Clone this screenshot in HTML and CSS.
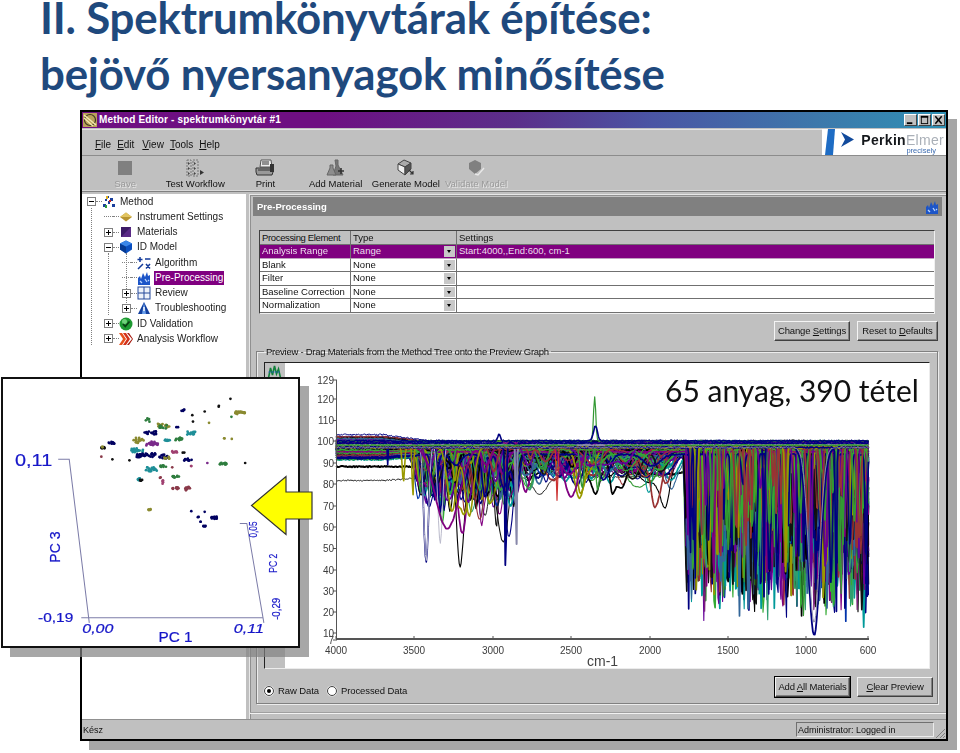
FILE: index.html
```html
<!DOCTYPE html>
<html lang="hu">
<head>
<meta charset="utf-8">
<title>Spektrumkönyvtárak építése</title>
<link rel="stylesheet" href="styles.css">
</head>
<body>
<div class="slide">
  <h1 class="slide-title">II. Spektrumkönyvtárak építése:<br>bejövő nyersanyagok minősítése</h1>

  <div class="window">
    <div class="titlebar">
      <svg class="title-icon" viewBox="0 0 14 14"><rect width="14" height="14" fill="#b9a15a"/><circle cx="7" cy="7" r="5.5" fill="none" stroke="#3c3a20" stroke-width="1.2"/><path d="M1 2 L13 12 M1 5 L10 13" stroke="#f2e8b0" stroke-width="1.4"/></svg>
      <span class="title-text">Method Editor - spektrumkönyvtár #1</span>
      <div class="title-buttons">
        <span class="tbtn"><svg viewBox="0 0 12 11"><rect x="2" y="8" width="6" height="2" fill="#000"/></svg></span>
        <span class="tbtn"><svg viewBox="0 0 12 11"><rect x="2.5" y="1.5" width="7" height="8" fill="none" stroke="#000"/><rect x="2" y="1" width="8" height="2" fill="#000"/></svg></span>
        <span class="tbtn"><svg viewBox="0 0 12 11"><path d="M2.5 1.5 L9.5 9.5 M9.5 1.5 L2.5 9.5" stroke="#000" stroke-width="1.7"/></svg></span>
      </div>
    </div>

    <div class="menubar">
      <nav class="menu">
        <span><u>F</u>ile</span><span><u>E</u>dit</span><span><u>V</u>iew</span><span><u>T</u>ools</span><span><u>H</u>elp</span>
      </nav>
      <div class="logo">
        <svg class="logo-mark" viewBox="0 0 30 26"><path d="M3 0 H10 L8 26 H0 Z" fill="#1e6cc4"/><path d="M16 3 L29 10.5 L16 18 L20 10.5 Z" fill="#114a9c"/></svg>
        <div class="logo-text"><div class="logo-name"><b>Perkin</b><span>Elmer</span></div><div class="logo-sub">precisely</div></div>
      </div>
    </div>

    <div class="toolbar">
      <div class="tool disabled">
        <svg viewBox="0 0 20 18"><rect x="3" y="2" width="14" height="14" fill="#808080"/></svg>
        <span>Save</span>
      </div>
      <div class="tool">
        <svg viewBox="0 0 20 18"><path d="M2 1h4v16H2zM8 1h5v16H8z" fill="none" stroke="#777" stroke-dasharray="2 1"/><path d="M3 3l2 1.5L3 6zM3 8l2 1.5L3 11zM3 13l2 1.5L3 16zM9 3l2 1.5L9 6zM9 8l2 1.5L9 11zM9 13l2 1.5L9 16z" fill="#444"/><path d="M15 11l4 2.5L15 16z" fill="#333"/></svg>
        <span>Test Workflow</span>
      </div>
      <div class="tool">
        <svg viewBox="0 0 20 18"><path d="M6 1h10l1 7H5z" fill="#eee" stroke="#555"/><path d="M1 9h16l1 4-1 3H2l-1-3z" fill="#999" stroke="#333"/><path d="M3 11h13M7 3h7M7 5h7" stroke="#333"/><rect x="15" y="5" width="4" height="8" fill="#333"/></svg>
        <span>Print</span>
      </div>
      <div class="tool">
        <svg viewBox="0 0 20 18"><path d="M9 1h3v5l5 10H7l3-9z" fill="#777" stroke="#666"/><path d="M4 6h3v3l3 7H1l3-7z" fill="#8d8d8d" stroke="#666"/><path d="M15 9v6M12 12h6" stroke="#333" stroke-width="1.6"/></svg>
        <span>Add Material</span>
      </div>
      <div class="tool">
        <svg viewBox="0 0 20 18"><path d="M2 5l6-4 7 3-6 4z" fill="#aaa" stroke="#444"/><path d="M2 5v6l7 5V8z" fill="#eee" stroke="#444"/><path d="M9 8l6-4v6l-6 6z" fill="#555" stroke="#444"/><path d="M13 11l4 4m0-3v3h-3" stroke="#333" fill="none" stroke-width="1.2"/></svg>
        <span>Generate Model</span>
      </div>
      <div class="tool disabled">
        <svg viewBox="0 0 20 18"><path d="M3 4l6-3 6 3v6l-6 5-6-5z" fill="#808080"/><path d="M9 15l3 1 6-7" stroke="#e8e8e8" stroke-width="1.4" fill="none"/></svg>
        <span>Validate Model</span>
      </div>
    </div>

    <div class="main">
      <aside class="tree">
        <span class="vline v0"></span><span class="vline v1"></span><span class="vline v2"></span>
        <div class="node l0"><i class="box minus"></i><i class="conn"></i>
          <svg class="ico" viewBox="0 0 14 14"><path d="M5 1h2v2H5zM3 4h2v2H3zM8 3h3v3H8zM6 6h2v3H6zM1 9h3v3H1zM10 9h3v3h-3z" fill="#1a3f9c"/><path d="M4 1h2v3H4z" fill="#e0b020"/><path d="M3 10h2v3H3z" fill="#2c9a3c"/><path d="M7 5h2v2H7z" fill="#c02020"/></svg>
          <span>Method</span></div>
        <div class="node l1"><i class="box none"></i><i class="conn"></i>
          <svg class="ico" viewBox="0 0 14 14"><path d="M7 2.5L13 7l-6 4.5L1 7z" fill="#b89430"/><path d="M7 2.5L13 7H1z" fill="#e2c460"/></svg>
          <span>Instrument Settings</span></div>
        <div class="node l1"><i class="box plus"></i><i class="conn"></i>
          <svg class="ico" viewBox="0 0 14 14"><rect x="2" y="2" width="10" height="10" fill="#3c1a66"/><path d="M12 2v10H2z" fill="#5a2a86"/></svg>
          <span>Materials</span></div>
        <div class="node l1"><i class="box minus"></i><i class="conn"></i>
          <svg class="ico" viewBox="0 0 14 14"><path d="M7 0.5l6 3v6l-6 4-6-4v-6z" fill="#0a4fc0"/><path d="M7 6.5v7l-6-4v-6z" fill="#063a92"/><path d="M7 .5l6 3-6 3-6-3z" fill="#3a86e8"/></svg>
          <span>ID Model</span></div>
        <div class="node l2"><i class="box none"></i><i class="conn"></i>
          <svg class="ico" viewBox="0 0 14 14"><path d="M3 1v5M0.5 3.500h5M8 3h5.500M1 13L6 8M9 8l4 4.500M13 8L9 12.500" stroke="#123a9a" stroke-width="1.500" fill="none"/></svg>
          <span>Algorithm</span></div>
        <div class="node l2"><i class="box none"></i><i class="conn"></i>
          <svg class="ico" viewBox="0 0 14 14"><path d="M1 14V7l2-2 1 3 2-6 2 4 2-5 1 4 2-1v10z" fill="#1c55c8"/><path d="M3 10l2 2M8 8l2 3M11 9l1 1" stroke="#bcd6ff" stroke-width="1.300"/></svg>
          <span class="sel">Pre-Processing</span></div>
        <div class="node l2"><i class="box plus"></i><i class="conn"></i>
          <svg class="ico" viewBox="0 0 14 14"><rect x="1" y="1" width="12" height="12" fill="#eef2fa" stroke="#24489a"/><path d="M7 1v12M1 7h12" stroke="#24489a"/></svg>
          <span>Review</span></div>
        <div class="node l2"><i class="box plus"></i><i class="conn"></i>
          <svg class="ico" viewBox="0 0 14 14"><path d="M7 1l6 12H1z" fill="#123f9e"/><path d="M7 1l2 12H5z" fill="#6aa0ec"/><path d="M6.300 6h1.400v4H6.300z" fill="#fff"/></svg>
          <span>Troubleshooting</span></div>
        <div class="node l1"><i class="box plus"></i><i class="conn"></i>
          <svg class="ico" viewBox="0 0 14 14"><circle cx="7" cy="7" r="6.500" fill="#1e9a32"/><circle cx="5.500" cy="4.500" r="2.500" fill="#6fd07a"/><path d="M4 7l2.300 2.500L10.500 4.500" stroke="#0b3d14" stroke-width="1.700" fill="none"/></svg>
          <span>ID Validation</span></div>
        <div class="node l1"><i class="box plus"></i><i class="conn"></i>
          <svg class="ico" viewBox="0 0 14 14"><path d="M0 1l4 6-4 6h3l4-6-4-6z" fill="#e8501c"/><path d="M4 1l4 6-4 6h3l4-6-4-6z" fill="#d4321a"/><path d="M8 1l5 6-5 6h2l4-6-4-6z" fill="#a81e12"/></svg>
          <span>Analysis Workflow</span></div>
      </aside>

      <section class="panel">
        <header class="panel-head">
          <span>Pre-Processing</span>
          <svg class="head-ico" viewBox="0 0 14 14"><path d="M1 14V7l2-2 1 3 2-6 2 4 2-5 1 4 2-1v10z" fill="#1c55c8"/><path d="M3 10l2 2M8 8l2 3M11 9l1 1" stroke="#bcd6ff" stroke-width="1.300"/></svg>
        </header>

        <div class="grid">
          <div class="cell hd tight">Processing Element</div><div class="cell hd">Type</div><div class="cell hd last">Settings</div>
          <div class="cell on">Analysis Range</div><div class="cell on combo">Range<i class="drop"></i></div><div class="cell on last">Start:4000,,End:600, cm-1</div>
          <div class="cell">Blank</div><div class="cell combo">None<i class="drop"></i></div><div class="cell last"></div>
          <div class="cell">Filter</div><div class="cell combo">None<i class="drop"></i></div><div class="cell last"></div>
          <div class="cell">Baseline Correction</div><div class="cell combo">None<i class="drop"></i></div><div class="cell last"></div>
          <div class="cell">Normalization</div><div class="cell combo">None<i class="drop"></i></div><div class="cell last"></div>
        </div>

        <div class="actions">
          <span class="btn w-change"><span>Change <u>S</u>ettings</span></span>
          <span class="btn w-reset"><span>Reset to <u>D</u>efaults</span></span>
        </div>

        <fieldset class="preview">
          <legend>Preview - Drag Materials from the Method Tree onto the Preview Graph</legend>
          <div class="chart">
            <div class="chart-tools">
              <svg class="chart-tool" viewBox="0 0 14 14"><path d="M1 13L3 3l2 7 2-9 2 8 2-5 2 9" fill="none" stroke="#11803a" stroke-width="1.600"/><path d="M1 7h12" stroke="#2a5ac8" stroke-dasharray="2 1"/></svg>
            </div>
            <svg id="spectra" class="plot" viewBox="285 363 644 305" preserveAspectRatio="none"></svg>
          </div>
          <div class="preview-foot">
            <label class="radio"><i class="dot on"></i>Raw Data</label>
            <label class="radio"><i class="dot"></i>Processed Data</label>
            <span class="foot-gap"></span>
            <span class="btn default w-add"><span>Add <u>A</u>ll Materials</span></span>
            <span class="btn w-clear"><span><u>C</u>lear Preview</span></span>
          </div>
        </fieldset>
        <div class="panel-rule"></div>
      </section>
    </div>

    <footer class="status">
      <span class="status-msg">Kész</span>
      <span class="status-user">Administrator: Logged in</span>
      <svg class="grip" viewBox="0 0 12 12"><path d="M11 2L2 11M11 6L6 11M11 9L9 11" stroke="#808080" fill="none"/></svg>
    </footer>
  </div>

  <div class="pca">
    <svg id="pca" viewBox="3 379 294 266">
      <g class="axis-lines">
        <path d="M58 459H69L89 622"/>
        <path d="M81 617H262"/>
        <path d="M239 523H246L263 622"/>
      </g>
      <text class="pc big" x="15" y="466" textLength="37" lengthAdjust="spacingAndGlyphs">0,11</text>
      <text class="pc lab" transform="translate(60 562) rotate(-90)" textLength="31" lengthAdjust="spacingAndGlyphs">PC 3</text>
      <text class="pc mid" x="38" y="621" textLength="35" lengthAdjust="spacingAndGlyphs">-0,19</text>
      <text class="pc mid ital" x="82" y="632" textLength="31" lengthAdjust="spacingAndGlyphs">0,00</text>
      <text class="pc mid ital" x="233" y="632" textLength="30" lengthAdjust="spacingAndGlyphs">0,11</text>
      <text class="pc lab" x="158" y="641" textLength="34" lengthAdjust="spacingAndGlyphs">PC 1</text>
      <text class="pc small" transform="translate(256 537) rotate(-90)" textLength="16" lengthAdjust="spacingAndGlyphs">0,05</text>
      <text class="pc small" transform="translate(276 572) rotate(-90)" textLength="19" lengthAdjust="spacingAndGlyphs">PC 2</text>
      <text class="pc small" transform="translate(279 619) rotate(-90)" textLength="22" lengthAdjust="spacingAndGlyphs">-0,29</text>
      <g id="pca-points"></g>
    </svg>
  </div>

  <svg class="arrow" viewBox="0 0 64 62"><path d="M36 1.500V17H62V44H36V59.500L1.500 30.500Z" fill="#ffff00" stroke="#333" stroke-width="1.200"/></svg>

  <div class="note">65 anyag, 390 tétel</div>
</div>
<script src="script.js"></script>
</body>
</html>
```

FILE: styles.css
```css
* { box-sizing: border-box; }
html, body { margin: 0; padding: 0; background: #fff; }
.slide { position: relative; width: 960px; height: 753px; overflow: hidden; }

.slide-title {
  margin: -11px 0 0 40px;
  font: 700 43.800px/56px "Lato", "Liberation Sans", sans-serif;
  letter-spacing: -0.2px;
  color: #1f497d;
  white-space: nowrap;
}

.window {
  display: flex;
  flex-direction: column;
  width: 868px;
  height: 631px;
  margin: 9px 0 0 80px;
  border: 2px solid #000;
  background: #c0c0c0;
  box-shadow: 9px 9px 0 #a6a6a6;
  font: 10px/12px "Liberation Sans", sans-serif;
  color: #111;
  filter: blur(0.4px);
}

.titlebar {
  display: flex;
  align-items: center;
  height: 16px;
  padding: 0 1px 0 1px;
  background: linear-gradient(90deg, #6e0f82 0%, #6e0f82 28%, #5b2f8a 50%, #4a55a4 66%, #3d78ab 85%, #2f90b4 100%);
  flex: none;
}
.title-icon { width: 14px; height: 14px; flex: none; }
.title-text { margin-left: 2px; font-weight: 700; color: #fff; letter-spacing: 0.15px; }
.title-buttons { display: flex; gap: 1px; margin-left: auto; }
.tbtn {
  display: block;
  width: 13px;
  height: 12px;
  background: #c0c0c0;
  border: 1px solid;
  border-color: #fff #444 #444 #fff;
}
.tbtn svg { display: block; width: 11px; height: 10px; }

.menubar {
  display: flex;
  height: 27px;
  flex: none;
  margin-top: 1px;
  border-bottom: 1px solid #8c8c8c;
  box-shadow: inset 0 1px 0 #e4e4e4;
}
.menu { display: flex; align-items: center; padding: 5px 0 0 13px; gap: 6px; flex: 1; }
.menu span:nth-child(3) { margin-left: 2px; }
.logo {
  display: flex;
  width: 124px;
  background: #fff;
  align-items: center;
  padding: 0 2px 0 3px;
}
.logo-mark { width: 30px; height: 26px; flex: none; }
.logo-text { flex: 1; text-align: right; padding-top: 3px; }
.logo-name { font: 14px/14px "Liberation Sans", sans-serif; color: #aab0b8; white-space: nowrap; letter-spacing: 0.3px; }
.logo-name b { color: #15181c; font-weight: 700; }
.logo-sub { font-size: 7.500px; line-height: 8px; color: #3d6cb0; padding-right: 8px; }

.toolbar {
  display: flex;
  flex: none;
  height: 36px;
  padding-left: 8px;
  border-bottom: 1px solid #808080;
  box-shadow: inset 0 -1px 0 #d8d8d8;
}
.tool {
  display: flex;
  flex-direction: column;
  align-items: center;
  width: 70.200px;
  padding-top: 3px;
}
.tool svg { width: 20px; height: 18px; flex: none; }
.tool span { margin-top: 1px; white-space: nowrap; font-size: 9.500px; }
.tool.disabled span { color: #9a9a9a; text-shadow: 1px 1px 0 #e8e8e8; }

.main { display: flex; flex: 1; min-height: 0; gap: 3px; padding: 2px 0 0 0; }

.tree {
  position: relative;
  width: 164px;
  flex: none;
  background: #fff;
  font-size: 10px;
  color: #222;
}
.node { display: flex; align-items: center; height: 15.250px; white-space: nowrap; }
.node.l0 { padding-left: 5px; }
.node.l1 { padding-left: 22px; }
.node.l2 { padding-left: 40px; }
.box { position: relative; display: block; width: 9px; height: 9px; flex: none; background: #fff; border: 1px solid #808080; }
.box.minus::before, .box.plus::before { content: ""; position: absolute; left: 1px; top: 3px; width: 5px; height: 1px; background: #000; }
.box.plus::after { content: ""; position: absolute; left: 3px; top: 1px; width: 1px; height: 5px; background: #000; }
.box.none { height: 0; border: 0; border-top: 1px dotted #808080; background: none; }
.conn { display: block; width: 6px; height: 0; flex: none; border-top: 1px dotted #808080; }
.ico { width: 14px; height: 14px; flex: none; margin-right: 4px; }
.sel { background: #800080; color: #fff; padding: 1px 1px 1px 1px; margin-left: -1px; }
.vline { position: absolute; width: 0; border-left: 1px dotted #808080; }
.v0 { left: 9px; top: 14px; height: 137px; }
.v1 { left: 26px; top: 59px; height: 62px; }
.v2 { left: 44px; top: 59px; height: 60px; }

.panel {
  display: flex;
  flex-direction: column;
  flex: 1;
  min-width: 0;
  padding: 2px 3px 0 3px;
  border-left: 1px solid #e8e8e8;
  border-top: 1px solid #e8e8e8;
  box-shadow: inset 1px 1px 0 #909090;
}
.panel-head {
  display: flex;
  align-items: center;
  justify-content: space-between;
  height: 19px;
  flex: none;
  margin-right: 1px;
  padding: 0 3px 0 4px;
  background: #808080;
  color: #fff;
  font-weight: 700;
  font-size: 9.500px;
}
.head-ico { width: 14px; height: 14px; }

.grid {
  display: grid;
  grid-template-columns: 91px 106px 1fr;
  grid-template-rows: 14px repeat(5, 13.500px);
  flex: none;
  margin: 14px 8px 0 6px;
  border: 1px solid;
  border-color: #404040 #f0f0f0 #f0f0f0 #404040;
  background: #fff;
  font-size: 9.500px;
}
.cell {
  display: flex;
  align-items: center;
  padding-left: 2px;
  white-space: nowrap;
  border-right: 1px solid #707070;
  border-bottom: 1px solid #707070;
  min-width: 0;
  position: relative;
}
.cell.last { border-right: 0; }
.cell.hd { background: #c0c0c0; }
.cell.tight { letter-spacing: -0.35px; }
.cell.on { background: #800080; color: #ecdcec; border-bottom-color: #c0a0c0; }
.drop {
  position: absolute;
  right: 1px;
  top: 1px;
  bottom: 1px;
  width: 11px;
  background: #c8c8c8;
}
.drop::after {
  content: "";
  position: absolute;
  left: 3px;
  top: 4px;
  border: 2.500px solid transparent;
  border-top: 3px solid #000;
  border-bottom: 0;
}

.actions { display: flex; justify-content: flex-end; gap: 7px; flex: none; margin: 7px 5px 0 0; }
.btn {
  display: flex;
  align-items: center;
  justify-content: center;
  height: 20px;
  flex: none;
  white-space: nowrap;
  background: #c0c0c0;
  border: 1px solid;
  border-color: #f4f4f4 #404040 #404040 #f4f4f4;
  box-shadow: inset -1px -1px 0 #808080;
  font-size: 9.500px;
  letter-spacing: -0.15px;
}
.btn.default { outline: 1px solid #000; outline-offset: 0; }
.w-change { width: 76px; }
.w-reset { width: 81px; }
.w-add { width: 75px; }
.w-clear { width: 76px; }

.preview {
  display: flex;
  flex-direction: column;
  flex: none;
  min-width: 0;
  height: 358px;
  margin: 5px 5px 0 3px;
  padding: 0 7px 0 7px;
  border: 1px solid #808080;
  box-shadow: inset 1px 1px 0 #ececec, 1px 1px 0 #ececec;
  font-size: 9.500px;
}
.preview legend { padding: 0 2px; margin-left: 0; white-space: nowrap; font-size: 9.500px; letter-spacing: -0.25px; }
.chart {
  display: flex;
  flex: none;
  height: 307px;
  margin-top: 4px;
  border: 1px solid;
  border-color: #222 #ececec #ececec #222;
  background: #fff;
}
.chart-tools { width: 20px; flex: none; background: #c0c0c0; padding: 2px 0 0 2px; }
.chart-tool { display: block; width: 15px; height: 14px; }
.plot { flex: 1; min-width: 0; height: 100%; display: block; }
.plot .tick-label { font: 10px "Liberation Sans", sans-serif; fill: #3c3c3c; }
.plot .unit-label { font: 14px "Liberation Sans", sans-serif; fill: #444; }
.plot .axis { stroke: #555; fill: none; }
.plot .axis-main { stroke: #555; stroke-width: 2; }
.plot .trace { fill: none; stroke-linejoin: round; }

.preview-foot { display: flex; align-items: center; flex: none; height: 36px; padding: 0; gap: 8px; }
.radio { display: flex; align-items: center; gap: 4px; margin-top: 8px; letter-spacing: -0.1px; }
.dot {
  position: relative;
  display: block;
  width: 10px;
  height: 10px;
  border-radius: 50%;
  background: #fff;
  border: 1px solid #404040;
  box-shadow: 0 0 0 .5px #eee;
}
.dot.on::after { content: ""; position: absolute; left: 2px; top: 2px; width: 4px; height: 4px; border-radius: 50%; background: #000; }
.foot-gap { flex: 1; }
.preview-foot .w-add { margin-right: -1px; }
.preview-foot .w-clear { margin-right: -3px; }

.panel-rule { height: 2px; flex: none; margin: 8px -3px 0 -3px; background: #f2f2f2; border-top: 1px solid #a0a0a0; }

.status { display: flex; align-items: center; height: 20px; flex: none; padding: 0 0 0 1px; border-top: 1px solid #909090; font-size: 9px; }
.status-msg { flex: 1; }
.status-user {
  width: 138px;
  height: 15px;
  padding: 1px 0 0 1px;
  border: 1px solid;
  border-color: #707070 #ececec #ececec #707070;
}
.grip { width: 12px; height: 12px; margin-left: 0; align-self: flex-end; }

.pca {
  position: absolute;
  left: 1px;
  top: 377px;
  width: 299px;
  height: 271px;
  background: #fff;
  border: 2px solid #111;
  box-shadow: 9px 9px 0 rgba(130, 130, 130, .7);
}
.pca svg { display: block; width: 295px; height: 267px; }
.axis-lines path { fill: none; stroke: #7c7ca8; stroke-width: 1; }
.pc { font-family: "Liberation Sans", sans-serif; fill: #1616c8; stroke: #1616c8; stroke-width: .2px; }
.pc.big { font-size: 16px; }
.pc.lab { font-size: 14px; }
.pc.mid { font-size: 12px; }
.pc.small { font-size: 10px; }
.pc.ital { font-style: italic; }

.arrow { position: absolute; left: 250px; top: 475px; width: 64px; height: 62px; }

.note {
  position: absolute;
  left: 665px;
  top: 371px;
  font: 400 30px/38px "Lato", "Liberation Sans", sans-serif;
  color: #111;
  white-space: nowrap;
}
```

FILE: script.js
```js
(function () {
  var NS = "http://www.w3.org/2000/svg";
  var seed = 12345;
  function rnd() { seed = (seed * 1664525 + 1013904223) >>> 0; return seed / 4294967296; }
  function el(name, attrs, parent, text) {
    var e = document.createElementNS(NS, name);
    for (var k in attrs) e.setAttribute(k, attrs[k]);
    if (text !== undefined) e.textContent = text;
    parent.appendChild(e);
    return e;
  }

  /* ---------- spectra chart ---------- */
  var svg = document.getElementById("spectra");
  function px(w) { return 336 + (4000 - w) * 533 / 3400; }
  function py(v) { return 441 + (100 - v) * 2.135; }

  var palette = ["#000080", "#800080", "#000000", "#339933", "#009999", "#999900", "#993333",
                 "#0033aa", "#660099", "#000080", "#800080", "#111111", "#336699", "#7a1f7a", "#2f9f6f", "#33aa33"];

  function gauss(w, c, s) { var d = (w - c) / s; return Math.exp(-d * d); }
  function clamp(x) { return x < 0 ? 0 : x > 1 ? 1 : x; }

  /* "bands" add up; "peaks" (the fingerprint region) do not: the deepest one at a point wins */
  function spectrum(opts) {
    var d = "", w, v, deepest;
    var peaks = opts.peaks || [];
    for (w = 4000; w >= 600; w -= 6) {
      v = opts.base + opts.tilt * clamp((w - 3400) / 300);
      opts.bands.forEach(function (b) { v -= b[2] * gauss(w, b[0], b[1]); });
      deepest = 0;
      peaks.forEach(function (p) { deepest = Math.max(deepest, p[2] * gauss(w, p[0], p[1])); });
      v = Math.max(v - deepest, 7);
      d += (d ? "L" : "M") + px(w).toFixed(1) + " " + py(v + (rnd() - .5) * .6).toFixed(1);
    }
    return d;
  }

  function trace(parent, s) {
    el("path", { "class": "trace", d: spectrum({ base: s.base, tilt: s.tilt, bands: s.bands }), stroke: s.stroke, "stroke-width": s.sw }, parent);
  }

  var under = el("g", {}, svg);
  var plot = el("g", {}, svg);
  var i, j;

  [
    { base: 92, tilt: 0, stroke: "#000", sw: 1.5, bands: [[1100, 500, -5]] },
    { base: 88, tilt: 0, stroke: "#000", sw: 2, bands: [[3000, 100, -5], [1900, 250, 4], [1100, 400, -12]] },
    { base: 83, tilt: -1.5, stroke: "#222", sw: 1, bands: [[3050, 30, 18], [2900, 30, 10], [2700, 60, 8], [1100, 500, -15]] }
  ].forEach(function (s) { trace(under, s); });

  for (i = 0; i < 170; i++) {
    var bands = [], peaks = [];
    var base = 93 + rnd() * 7;
    var nMid = 1 + Math.floor(rnd() * 5);
    for (j = 0; j < nMid; j++) {
      bands.push([3480 - rnd() * 640, 15 + rnd() * 35, 4 + rnd() * 18]);
    }
    var nHigh = 1 + Math.floor(rnd() * 4);
    for (j = 0; j < nHigh; j++) {
      bands.push([2800 - rnd() * 950, 20 + rnd() * 70, 2 + rnd() * 11]);
    }
    var nFp = 14 + Math.floor(rnd() * 14);
    for (j = 0; j < nFp; j++) {
      var u = rnd();
      peaks.push([1770 - rnd() * 1170, 5 + rnd() * 9, 12 + rnd() * 30 + u * u * u * 42]);
    }
    if (rnd() < .6) peaks.push([1745 - rnd() * 20, 6, 20 + rnd() * 30]);
    el("path", {
      "class": "trace",
      d: spectrum({ base: base, tilt: rnd() * 5 - 2.5, bands: bands, peaks: peaks }),
      stroke: palette[Math.floor(rnd() * palette.length)],
      "stroke-width": rnd() < .6 ? 1.7 : 1.1
    }, plot);
  }

  [
    { base: 100, tilt: 3, stroke: "#000080", sw: 1, bands: [[3000, 150, 3]] },
    { base: 99, tilt: 0, stroke: "#000080", sw: 1.6, bands: [[3425, 22, 56], [3335, 20, 32], [3670, 3, 10]] },
    { base: 99, tilt: 0, stroke: "#bbbbcc", sw: 1, bands: [[3425, 22, 55], [3335, 22, 47]] },
    { base: 99, tilt: 0, stroke: "#800080", sw: 1.8, bands: [[3290, 110, 40], [3040, 45, 10], [2500, 70, 25]] },
    { base: 99, tilt: 0, stroke: "#000080", sw: 1.8, bands: [[2918, 7, 62], [2850, 6, 30]] },
    { base: 98, tilt: 0, stroke: "#8888aa", sw: 2, bands: [[2850, 5, 54]] },
    { base: 97, tilt: 0, stroke: "#999900", sw: 1.6, bands: [[3570, 10, 16], [3510, 6, 25], [3150, 40, 32], [3260, 40, 30]] },
    { base: 98, tilt: 0, stroke: "#339933", sw: 1.4, bands: [[2350, 12, -22], [2430, 18, 20], [2340, 30, 25]] },
    { base: 100, tilt: 0, stroke: "#339933", sw: 1.2, bands: [[2350, 10, -21]] },
    { base: 100, tilt: 0, stroke: "#000080", sw: 1.6, bands: [[2345, 18, -7], [2960, 12, -3]] },
    { base: 97, tilt: 0, stroke: "#cc3333", sw: 1.2, bands: [[2590, 7, 25]] },
    { base: 97, tilt: 0, stroke: "#000080", sw: 1.8, bands: [[950, 55, 88], [810, 5, 90], [1270, 5, 70]] },
    { base: 97, tilt: 0, stroke: "#999900", sw: 1.8, bands: [[1700, 7, 72], [1130, 8, 62]] },
    { base: 97, tilt: 0, stroke: "#000080", sw: 1.6, bands: [[1740, 6, 55], [1710, 6, 68]] },
    { base: 97, tilt: 0, stroke: "#8888aa", sw: 1, bands: [[950, 50, 82]] }
  ].forEach(function (s) { trace(plot, s); });

  el("path", { "class": "axis", d: "M336.500 380V639" }, svg);
  el("path", { "class": "axis-main", d: "M336 639H869" }, svg);
  var ys = [[129, 380], [120, 399], [110, 420.5], [100, 441], [90, 463], [80, 484], [70, 506], [60, 527],
            [50, 548.5], [40, 570], [30, 591], [20, 612], [10, 633], [7, 640]];
  ys.forEach(function (t) {
    el("path", { "class": "axis", d: "M333 " + t[1] + "H337" }, svg);
    el("text", { "class": "tick-label", x: 334, y: t[1] + 3.5, "text-anchor": "end" }, svg, t[0]);
  });
  [[4000, 336], [3500, 414], [3000, 493], [2500, 571], [2000, 650], [1500, 728], [1000, 806], [600, 868]].forEach(function (t) {
    el("path", { "class": "axis", d: "M" + t[1] + " 636V639" }, svg);
    el("text", { "class": "tick-label", x: t[1], y: 654, "text-anchor": "middle" }, svg, t[0]);
  });
  el("text", { "class": "unit-label", x: 587, y: 666 }, svg, "cm-1");

  /* ---------- PCA scatter ---------- */
  var N = "#000060", K = "#111", O = "#8a8a30", G = "#2e7d3e", T = "#1f8f98", P = "#7a2a8a", M = "#a04070", R = "#8a3a4a";
  /* x, y (in 3x crop units of the plot), count, spread x, spread y, colour */
  var clusters = [
    [335, 218, 7, 10, 3, N], [308, 232, 4, 5, 3, K], [308, 230, 2, 3, 2, O], [303, 259, 1, 0, 0, R], [336, 267, 1, 0, 0, K],
    [387, 270, 1, 0, 0, K], [445, 150, 3, 10, 6, G], [490, 165, 10, 18, 6, O], [490, 170, 5, 14, 5, G], [450, 188, 10, 18, 5, N],
    [415, 210, 12, 16, 8, O], [455, 220, 14, 18, 6, P], [410, 240, 14, 18, 6, T], [435, 255, 22, 30, 6, N], [490, 258, 10, 16, 6, N],
    [500, 262, 4, 12, 4, O], [520, 245, 5, 10, 3, M], [550, 248, 2, 8, 2, K], [500, 210, 6, 8, 2, T], [535, 205, 8, 12, 5, G],
    [572, 188, 10, 14, 5, T], [528, 172, 2, 6, 2, N], [548, 120, 3, 6, 3, N], [575, 135, 1, 0, 0, K], [577, 154, 1, 0, 0, K],
    [612, 124, 1, 0, 0, K], [650, 108, 2, 5, 2, K], [689, 86, 1, 0, 0, K], [718, 128, 12, 15, 4, O], [692, 140, 1, 0, 0, G],
    [625, 158, 1, 0, 0, O], [671, 205, 2, 1, 1, O], [693, 206, 1, 0, 0, O], [560, 268, 6, 14, 3, N], [572, 287, 2, 1, 1, M],
    [620, 278, 1, 0, 0, P], [665, 280, 7, 12, 3, G], [733, 278, 1, 0, 0, K], [488, 287, 5, 10, 3, G], [515, 291, 1, 0, 0, R],
    [455, 297, 12, 20, 6, T], [480, 322, 2, 3, 1, R], [487, 335, 3, 1, 6, M], [525, 318, 6, 10, 4, G], [418, 327, 6, 6, 3, T],
    [420, 330, 3, 5, 2, K], [525, 353, 5, 10, 3, R], [560, 355, 6, 8, 6, R], [446, 418, 4, 5, 2, O], [572, 422, 1, 0, 0, N],
    [612, 424, 1, 0, 0, N], [590, 440, 2, 6, 1, N], [640, 442, 10, 8, 4, N], [600, 453, 2, 3, 1, N], [612, 467, 3, 4, 2, N]
  ];
  var g = document.getElementById("pca-points");
  clusters.forEach(function (c) {
    var count = c[2] > 2 ? Math.round(c[2] * 1.6) : c[2];
    for (var n = 0; n < count; n++) {
      el("circle", {
        cx: (c[0] + (rnd() - .5) * 2 * c[3]) / 3,
        cy: 370 + (c[1] + (rnd() - .5) * 2 * c[4]) / 3,
        r: 1.35,
        fill: c[5]
      }, g);
    }
  });
})();
```
